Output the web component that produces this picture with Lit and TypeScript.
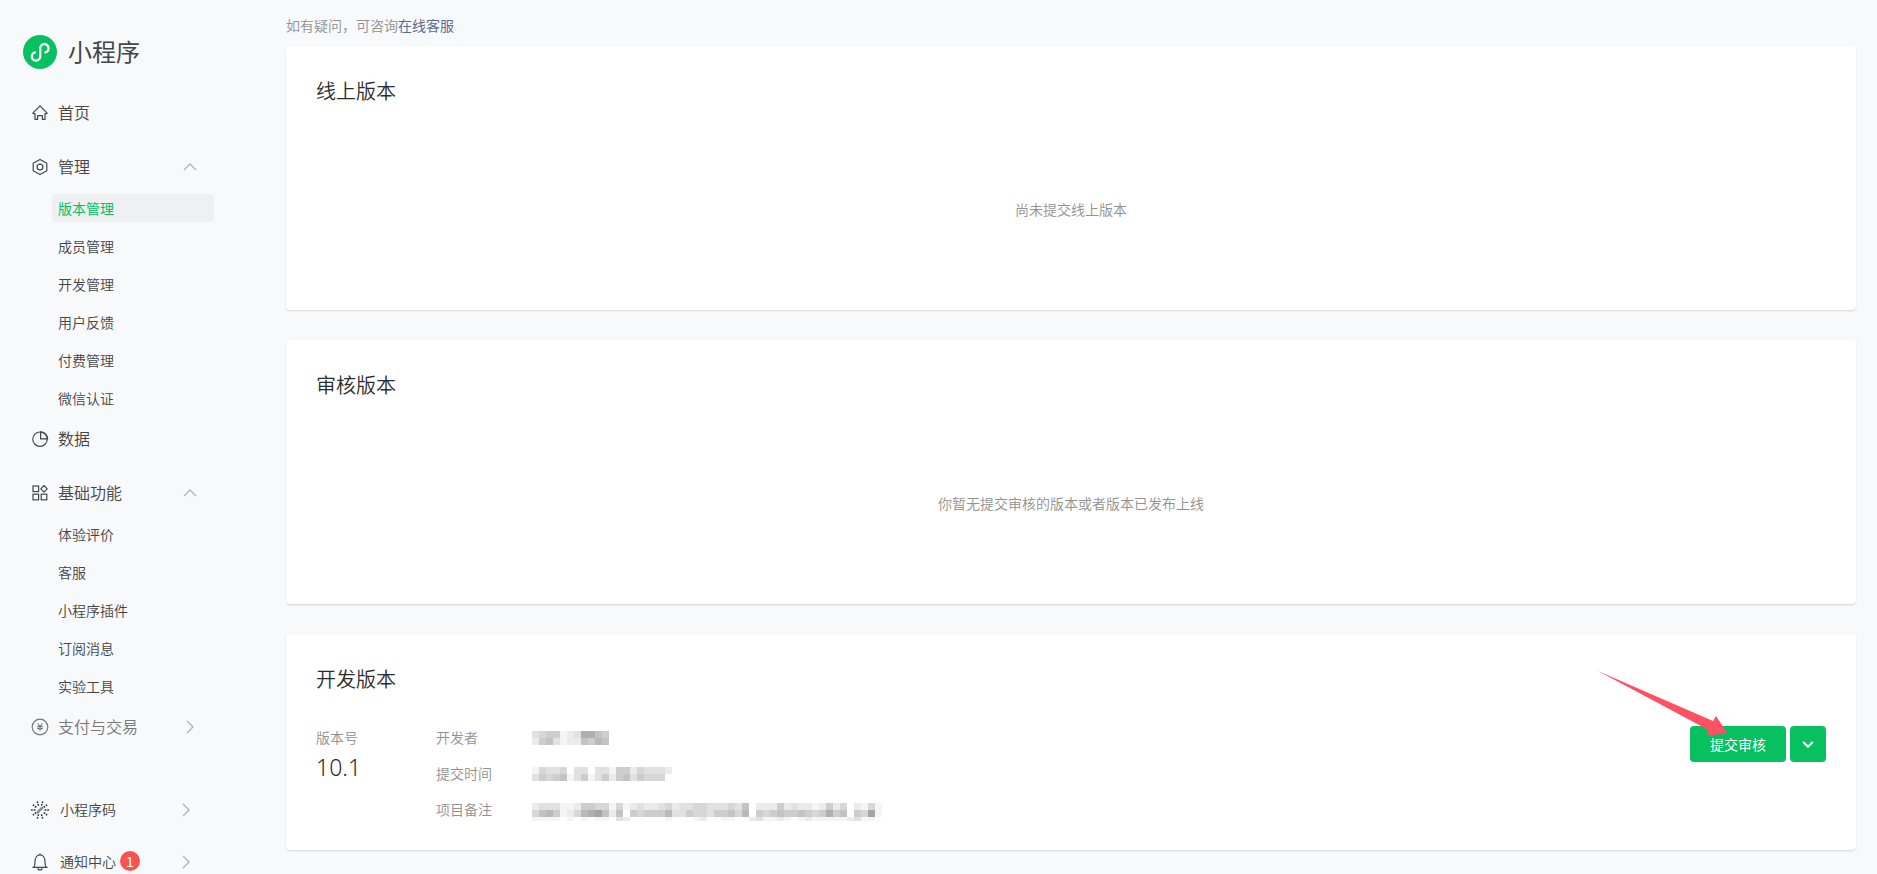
import { LitElement, html, css, svg, nothing } from "lit";
import { customElement, property, state } from "lit/decorators.js";

const spokes = Array.from({ length: 10 }, (_, i) => i * 36);

const icons: Record<string, unknown> = {
  home: svg`<path d="M8 .9 15.2 8.1l-.6.6H13v5.7H10.400V10.700H5.600v3.700H3V8.700H1.400l-.6-.6z" stroke-linejoin="round"/>`,
  manage: svg`<path d="M8 .4 14.800 4.200v7.600L8 15.600 1.200 11.800V4.200z" stroke-linejoin="round"/><circle cx="8" cy="8" r="2.900"/>`,
  data: svg`<circle cx="8" cy="8.200" r="7.200"/><path d="M8.600.8v7h7A7 7 0 0 0 8.600.8z"/>`,
  grid: svg`<rect x="1" y="1" width="5.600" height="5.600"/><rect x="1" y="9.200" width="5.600" height="5.600"/><rect x="9.200" y="9.200" width="5.600" height="5.600"/><path d="M12 .5 15.200 3.800 12 7.100 8.800 3.800z" stroke-linejoin="round"/>`,
  pay: svg`<circle cx="8" cy="8" r="7.800"/><path d="M5.600 4.500 8 7.500l2.400-3M8 7.500v4.300M5.200 7.700h5.600M5.200 9.600h5.600"/>`,
  code: svg`${spokes.map(
    (a) => svg`<path d="M12.600 8h1.700M15.300 8h1.600" stroke="#2b2b2c" stroke-width="1.500" transform=${`rotate(${a} 8 8)`}/>`
  )}<path d="M5.700 10.300 10.300 5.800" stroke="#8b8c8e" stroke-width="2.600" stroke-linecap="round"/>`,
  bell: svg`<path d="M8-.4v1.300M.4 13.400h15.200M2 13.400c1-1.700 1-3.200 1-5.700C3 3.600 5.200.9 8 .9s5 2.700 5 6.800c0 2.500 0 4 1 5.700M5.900 14.200a2.100 1.700 0 0 0 4.200 0" stroke-linejoin="round"/>`,
};

@customElement("line-icon")
class LineIcon extends LitElement {
  @property() name = "";
  static styles = css`
    :host { display: flex; flex: none; }
    svg { width: 16px; height: 16px; fill: none; stroke: currentColor; stroke-width: 1.2; overflow: visible; }
  `;
  render() {
    return html`<svg viewBox="0 0 16 16" aria-hidden="true">${icons[this.name]}</svg>`;
  }
}

@customElement("chevron-icon")
class ChevronIcon extends LitElement {
  @property() dir = "right";
  static styles = css`
    :host { display: flex; flex: none; }
    svg { width: 14px; height: 14px; fill: none; stroke: currentColor; }
  `;
  render() {
    const d = this.dir === "up" ? "M1 10 7 4l6 6" : this.dir === "down" ? "M2.200 5 7 9.800 11.800 5" : "M4 1l6 6-6 6";
    return html`<svg viewBox="0 0 14 14" aria-hidden="true"><path d=${d} stroke-width=${this.dir === "down" ? 2 : 1.4}></path></svg>`;
  }
}

/* Hidden value: each character is one grey level of a 7px cell, 0 is blank and 9 the darkest. */
@customElement("masked-value")
class MaskedValue extends LitElement {
  @property({ attribute: false }) rows: string[] = [];
  @property() label = "";
  static styles = css`
    :host { display: flex; }
    svg { display: block; height: 20px; }
  `;
  render() {
    const cols = Math.max(...this.rows.map((r) => r.length));
    return html`<svg width=${cols * 7} height="20" role="img" aria-label=${this.label} shape-rendering="crispEdges">
      ${this.rows.map((row, y) =>
        [...row].map((c, x) => {
          const level = 255 - Number(c) * 10;
          return c === "0"
            ? nothing
            : svg`<rect x=${x * 7} y=${y * 7} width="7" height=${y === 2 ? 4 : 7} fill=${`rgb(${level},${level},${level})`}/>`;
        })
      )}
    </svg>`;
  }
}

interface NavItem {
  icon: string;
  text: string;
  children?: string[];
  more?: boolean;
}

const nav: NavItem[] = [
  { icon: "home", text: "首页" },
  { icon: "manage", text: "管理", children: ["版本管理", "成员管理", "开发管理", "用户反馈", "付费管理", "微信认证"] },
  { icon: "data", text: "数据" },
  { icon: "grid", text: "基础功能", children: ["体验评价", "客服", "小程序插件", "订阅消息", "实验工具"] },
  { icon: "pay", text: "支付与交易", more: true },
];

const details = [
  { label: "开发者", rows: ["34551238865", "25631226576"] },
  { label: "提交时间", rows: ["14334033033155243332", "35456135135256354440"] },
  {
    label: "项目备注",
    rows: [
      "23331125544141232234233443334360222523221252402141",
      "46751247896260545557335443556470545655654585605491",
      "11110101011032000001000120011002311210121111123110",
    ],
  },
];

@customElement("app-root")
class AppRoot extends LitElement {
  @state() private current = "版本管理";
  @state() private closed: string[] = [];

  static styles = css`
    :host {
      display: grid;
      grid-template-columns: 286px minmax(0, 1fr);
      height: 100vh;
      overflow: hidden;
      background: #f8f9fb;
      color: #2c2c2c;
      font-family: "Noto Sans CJK SC", sans-serif;
      font-size: 14px;
      font-weight: 350;
      line-height: 20px;
    }
    * { box-sizing: border-box; }
    a { color: inherit; text-decoration: none; }
    button { border: 0; margin: 0; padding: 0; background: none; color: inherit; font: inherit; cursor: pointer; }
    h1, h2, p, dl, dd, ul { margin: 0; padding: 0; font-weight: inherit; }
    ul { list-style: none; }

    .side { height: 100vh; overflow: hidden; color: #444547; }
    .brand { display: flex; align-items: center; gap: 11px; padding: 35px 0 17px 23px; }
    .brand svg { width: 34px; height: 34px; }
    .brand h1 { padding-bottom: 2px; font-size: 24px; line-height: 32px; font-weight: 400; }
    .row { display: flex; align-items: center; gap: 10px; width: 100%; height: 54px; padding: 0 89px 0 32px; font-size: 16px; text-align: left; }
    .row > span { padding-bottom: 2px; }
    .row chevron-icon { margin-left: auto; color: #b2b3b5; }
    .row.faded { color: #77787a; }
    .sub { display: flex; flex-direction: column; gap: 10px; padding: 0 72px 0 52px; }
    .sub a { display: block; padding: 0 6px; border-radius: 4px; line-height: 28px; }
    .sub a.on { background: #eff0f2; color: #07c160; font-weight: 400; }
    .tools { padding-top: 30px; }
    .tools .row { height: 52px; gap: 12px; padding-right: 93px; font-size: 14px; }
    .label { display: flex; align-items: center; gap: 4px; }
    .badge { width: 20px; border-radius: 50%; background: #fa5151; color: #fff; font-weight: 400; line-height: 20px; text-align: center; }

    .main { padding: 15px 21px 24px 0; }
    .hint { margin-bottom: 11px; color: #919191; }
    .hint a { color: #576b95; font-weight: 400; }
    .cards { display: flex; flex-direction: column; gap: 30px; }
    .card { display: flex; flex-direction: column; min-height: 264px; padding: 30px 30px 0; border-radius: 4px; background: #fff; box-shadow: 0 1px 2px rgba(0, 0, 0, 0.14); }
    .card h2 { padding-bottom: 2px; font-size: 20px; line-height: 30px; }
    .empty { display: flex; flex: 1; align-items: center; justify-content: center; color: #919191; }
    .card.dev { min-height: 0; padding-bottom: 30px; }
    .body { display: flex; align-items: flex-start; padding-top: 30px; }
    .version { width: 120px; }
    .version dt, .info dt { color: #919191; line-height: 22px; }
    .version dd { font-family: "Noto Sans", sans-serif; font-size: 23px; line-height: 38px; }
    .info { display: grid; grid-template-columns: 96px 1fr; row-gap: 14px; flex: 1; }
    .info dd { display: flex; height: 22px; padding-top: 5px; }
    .actions { position: relative; display: flex; gap: 4px; }
    .btn { display: flex; align-items: center; justify-content: center; height: 36px; border-radius: 4px; background: #07c160; color: #fff; font-weight: 400; }
    .submit { width: 96px; }
    .more { width: 36px; }
    .pointer { position: absolute; right: 98px; top: -55px; width: 130px; height: 65px; pointer-events: none; }
  `;

  private toggle(name: string) {
    this.closed = this.closed.includes(name) ? this.closed.filter((n) => n !== name) : [...this.closed, name];
  }

  private pick(e: Event, name: string) {
    e.preventDefault();
    this.current = name;
  }

  private navItem(item: NavItem) {
    if (!item.children) {
      return html`<li>
        <a class="row ${item.more ? "faded" : ""}" href="#" @click=${(e: Event) => this.pick(e, item.text)}>
          <line-icon name=${item.icon}></line-icon><span>${item.text}</span>
          ${item.more ? html`<chevron-icon></chevron-icon>` : nothing}
        </a>
      </li>`;
    }
    const open = !this.closed.includes(item.text);
    return html`<li>
      <button class="row" aria-expanded=${open} @click=${() => this.toggle(item.text)}>
        <line-icon name=${item.icon}></line-icon><span>${item.text}</span>
        <chevron-icon dir=${open ? "up" : "right"}></chevron-icon>
      </button>
      ${open
        ? html`<ul class="sub">
            ${item.children.map(
              (c) => html`<li><a class=${c === this.current ? "on" : ""} href="#" @click=${(e: Event) => this.pick(e, c)}>${c}</a></li>`
            )}
          </ul>`
        : nothing}
    </li>`;
  }

  render() {
    return html`
      <aside class="side">
        <div class="brand">
          <svg viewBox="0 0 34 34" aria-hidden="true">
            <circle cx="17" cy="17" r="17" fill="#07c160" />
            <path d="M12 17.300A4.200 4.200 0 1 0 17.200 21.200V13.400A4.200 4.200 0 1 1 22.400 17.300" fill="none" stroke="#fff" stroke-width="2.300" stroke-linecap="round" />
          </svg>
          <h1>小程序</h1>
        </div>
        <nav><ul>${nav.map((i) => this.navItem(i))}</ul></nav>
        <div class="tools">
          <a class="row" href="#"><line-icon name="code"></line-icon><span>小程序码</span><chevron-icon></chevron-icon></a>
          <a class="row" href="#">
            <line-icon name="bell"></line-icon>
            <span class="label">通知中心<span class="badge">1</span></span>
            <chevron-icon></chevron-icon>
          </a>
        </div>
      </aside>
      <main class="main">
        <p class="hint">如有疑问，可咨询<a href="#">在线客服</a></p>
        <div class="cards">
          <section class="card">
            <h2>线上版本</h2>
            <p class="empty">尚未提交线上版本</p>
          </section>
          <section class="card">
            <h2>审核版本</h2>
            <p class="empty">你暂无提交审核的版本或者版本已发布上线</p>
          </section>
          <section class="card dev">
            <h2>开发版本</h2>
            <div class="body">
              <dl class="version"><dt>版本号</dt><dd>10.1</dd></dl>
              <dl class="info">
                ${details.map((d) => html`<dt>${d.label}</dt><dd><masked-value label=${d.label} .rows=${d.rows}></masked-value></dd>`)}
              </dl>
              <div class="actions">
                <button class="btn submit">提交审核</button>
                <button class="btn more" aria-label="更多操作"><chevron-icon dir="down"></chevron-icon></button>
                <svg class="pointer" viewBox="0 0 130 65" aria-hidden="true">
                  <path d="M0 0 115 50 118 45 129.500 62.500 109 64.500 110.500 59z" fill="#ff5162" />
                </svg>
              </div>
            </div>
          </section>
        </div>
      </main>
    `;
  }
}
